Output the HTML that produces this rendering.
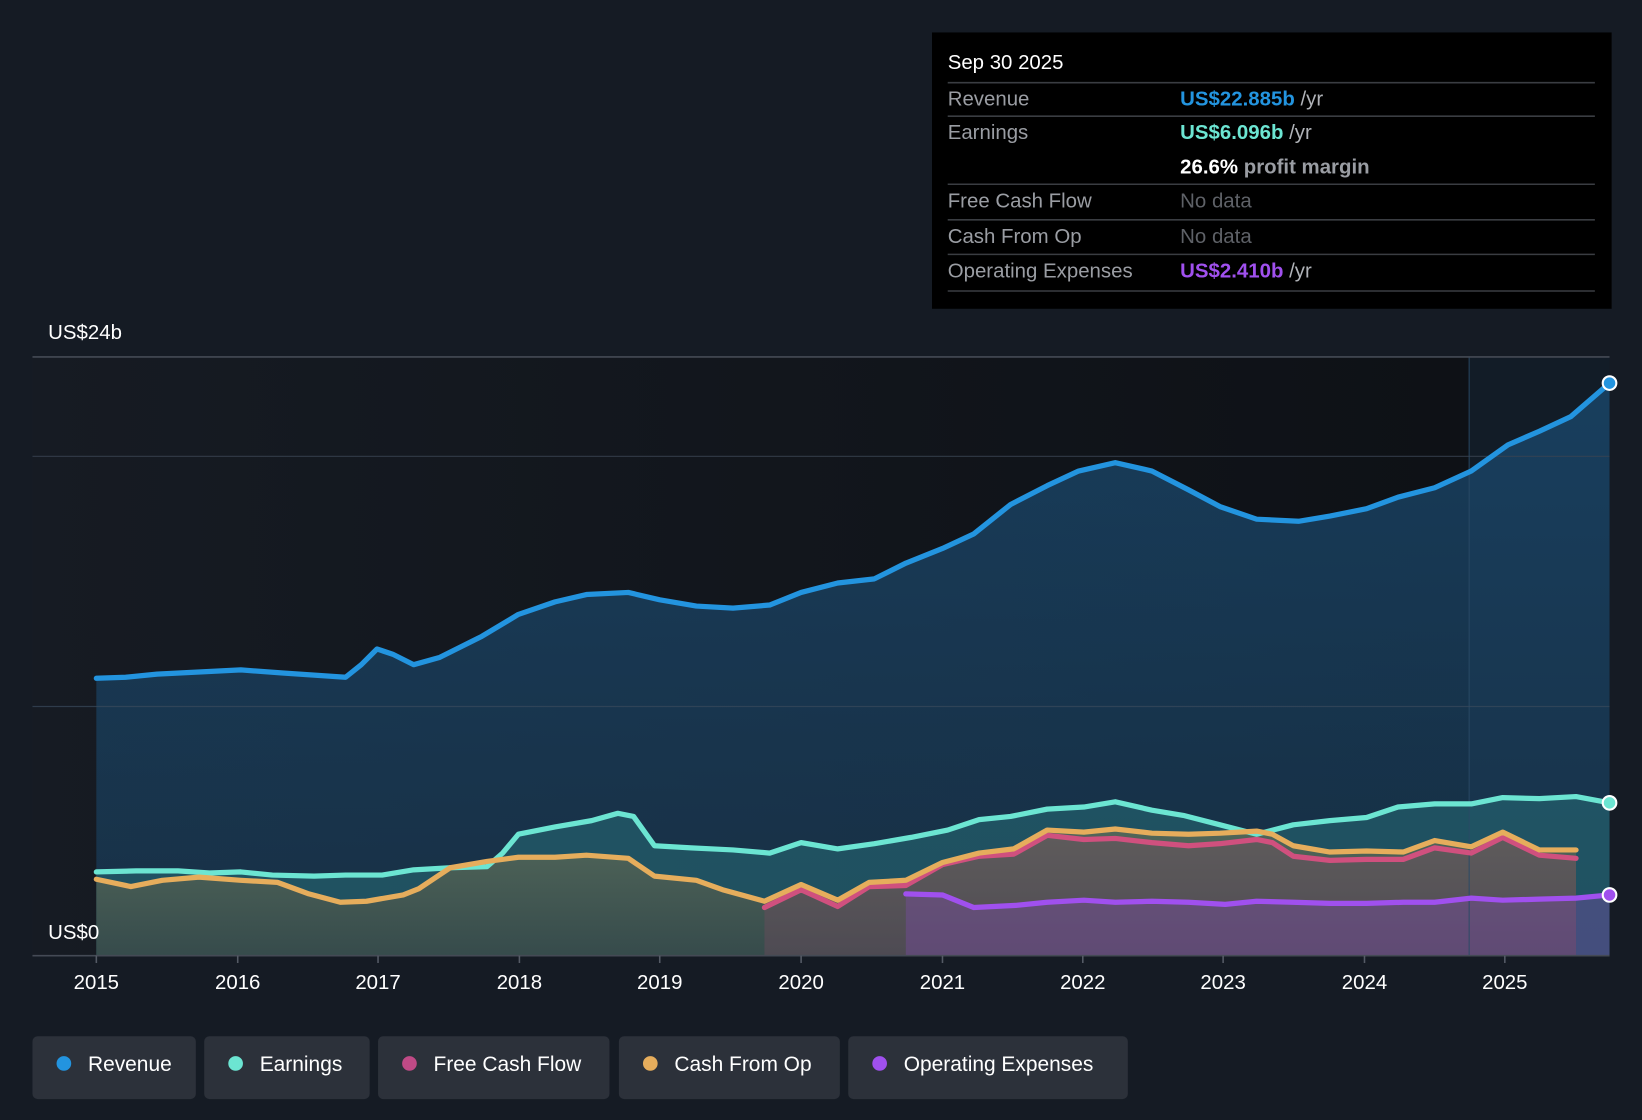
<!DOCTYPE html>
<html><head><meta charset="utf-8"><style>
html,body{margin:0;padding:0;background:#151b24;}
svg{display:block}
text{font-family:"Liberation Sans",sans-serif;}
</style></head><body>
<svg width="1642" height="1120" viewBox="0 0 1568 1070" preserveAspectRatio="none" xmlns="http://www.w3.org/2000/svg">
<defs>
<linearGradient id="plotbg" x1="0" x2="1" y1="0" y2="0">
<stop offset="0" stop-color="#161b23"/><stop offset="0.9" stop-color="#0e1116"/><stop offset="1" stop-color="#0e1116"/>
</linearGradient>
<linearGradient id="revf" x1="0" x2="0" y1="0" y2="1">
<stop offset="0" stop-color="#1a4a70" stop-opacity="0.75"/><stop offset="1" stop-color="#1a3a55" stop-opacity="0.7"/>
</linearGradient>
<linearGradient id="cashf" x1="0" x2="0" y1="0" y2="1">
<stop offset="0" stop-color="#5a6a58"/><stop offset="1" stop-color="#3a4a48"/>
</linearGradient>
</defs>
<rect width="1568" height="1070" fill="#151b24"/>
<rect x="31" y="341" width="1506" height="572" fill="url(#plotbg)"/>
<rect x="1403" y="341" width="134" height="572" fill="#1a3048" opacity="0.35"/>
<path fill="url(#revf)" d="M92,648 L120,647 150,644 190,642 230,640 270,643 300,645 330,647 345,635 360,620 375,625 395,635 420,628 460,608 495,587 530,575 560,568 600,566 630,573 665,579 700,581 735,578 765,566 800,557 835,553 865,538 900,524 930,510 965,482 1000,464 1030,450 1065,442 1100,450 1135,468 1165,484 1200,496 1240,498 1270,493 1305,486 1335,475 1370,466 1405,450 1440,425 1470,412 1500,398 1537,366 L1537,913 L92,913 Z"/>
<path fill="#2a7a80" fill-opacity="0.45" d="M92,833 L130,832 170,832 200,834 230,833 260,836 300,837 330,836 365,836 395,831 430,829 465,828 480,815 495,797 530,790 565,784 590,777 605,780 625,808 660,810 700,812 735,815 765,805 800,811 835,806 870,800 905,793 935,783 965,780 1000,773 1035,771 1065,766 1100,774 1130,779 1165,788 1200,797 1235,788 1270,784 1305,781 1335,771 1370,768 1405,768 1435,762 1470,763 1505,761 1537,767 L1537,913 L92,913 Z"/>
<path fill="url(#cashf)" fill-opacity="0.85" d="M92,840 L125,847 155,841 190,838 230,841 265,843 295,854 325,862 350,861 385,855 400,849 430,829 465,823 495,819 530,819 560,817 600,820 625,837 665,841 690,850 730,861 765,845 800,860 830,843 865,841 900,824 935,815 968,811 1000,793 1035,795 1065,792 1100,796 1135,797 1165,796 1200,794 1215,797 1235,808 1270,814 1305,813 1340,814 1370,803 1405,809 1435,795 1470,812 1505,812 L1505,913 L92,913 Z"/>
<path fill="#7a4a60" fill-opacity="0.35" d="M730,867 L765,850 800,866 830,847 865,846 900,826 935,818 968,816 1000,798 1035,802 1065,801 1100,805 1135,808 1165,806 1200,802 1215,805 1235,818 1270,822 1305,821 1340,821 1370,810 1405,815 1435,800 1470,817 1505,820 L1505,913 L730,913 Z"/>
<path fill="#7a4aa8" fill-opacity="0.4" d="M865,854 L900,855 930,867 970,865 1000,862 1035,860 1065,862 1100,861 1135,862 1170,864 1200,861 1235,862 1270,863 1305,863 1340,862 1370,862 1405,858 1435,860 1470,859 1505,858 1537,855 L1537,913 L865,913 Z"/>
<line x1="1403" y1="341" x2="1403" y2="913" stroke="#2a4a66" stroke-width="1.5" opacity="0.6"/>
<line x1="31" y1="341" x2="1537" y2="341" stroke="#444a55" stroke-width="1.5"/>
<line x1="31" y1="436" x2="1537" y2="436" stroke="#3a4452" stroke-width="1.2" opacity="0.7"/>
<line x1="31" y1="675" x2="1537" y2="675" stroke="#3a4a5c" stroke-width="1.2" opacity="0.7"/>
<line x1="31" y1="913" x2="1537" y2="913" stroke="#444a55" stroke-width="1.5"/>
<g fill="none" stroke-linejoin="round" stroke-linecap="round" stroke-width="5">
<path stroke="#2394df" d="M92,648 L120,647 150,644 190,642 230,640 270,643 300,645 330,647 345,635 360,620 375,625 395,635 420,628 460,608 495,587 530,575 560,568 600,566 630,573 665,579 700,581 735,578 765,566 800,557 835,553 865,538 900,524 930,510 965,482 1000,464 1030,450 1065,442 1100,450 1135,468 1165,484 1200,496 1240,498 1270,493 1305,486 1335,475 1370,466 1405,450 1440,425 1470,412 1500,398 1537,366"/>
<path stroke="#6ce5d2" d="M92,833 L130,832 170,832 200,834 230,833 260,836 300,837 330,836 365,836 395,831 430,829 465,828 480,815 495,797 530,790 565,784 590,777 605,780 625,808 660,810 700,812 735,815 765,805 800,811 835,806 870,800 905,793 935,783 965,780 1000,773 1035,771 1065,766 1100,774 1130,779 1165,788 1200,797 1235,788 1270,784 1305,781 1335,771 1370,768 1405,768 1435,762 1470,763 1505,761 1537,767"/>
<path stroke="#d0507e" d="M730,867 L765,850 800,866 830,847 865,846 900,826 935,818 968,816 1000,798 1035,802 1065,801 1100,805 1135,808 1165,806 1200,802 1215,805 1235,818 1270,822 1305,821 1340,821 1370,810 1405,815 1435,800 1470,817 1505,820"/>
<path stroke="#e6ad5c" d="M92,840 L125,847 155,841 190,838 230,841 265,843 295,854 325,862 350,861 385,855 400,849 430,829 465,823 495,819 530,819 560,817 600,820 625,837 665,841 690,850 730,861 765,845 800,860 830,843 865,841 900,824 935,815 968,811 1000,793 1035,795 1065,792 1100,796 1135,797 1165,796 1200,794 1215,797 1235,808 1270,814 1305,813 1340,814 1370,803 1405,809 1435,795 1470,812 1505,812"/>
<path stroke="#a050ee" d="M865,854 L900,855 930,867 970,865 1000,862 1035,860 1065,862 1100,861 1135,862 1170,864 1200,861 1235,862 1270,863 1305,863 1340,862 1370,862 1405,858 1435,860 1470,859 1505,858 1537,855"/>
</g>
<circle cx="1537" cy="366" r="6.5" fill="#2394df" stroke="#fff" stroke-width="2"/>
<circle cx="1537" cy="767" r="6.5" fill="#6ce5d2" stroke="#fff" stroke-width="2"/>
<circle cx="1537" cy="855" r="6.5" fill="#a050ee" stroke="#fff" stroke-width="2"/>
<text x="46" y="324" fill="#fff" font-size="19.5">US$24b</text>
<text x="46" y="897" fill="#fff" font-size="19.5">US$0</text>
<g fill="#fff" font-size="19.5" text-anchor="middle">
<text x="92" y="945">2015</text><text x="227" y="945">2016</text><text x="361" y="945">2017</text><text x="496" y="945">2018</text><text x="630" y="945">2019</text><text x="765" y="945">2020</text><text x="900" y="945">2021</text><text x="1034" y="945">2022</text><text x="1168" y="945">2023</text><text x="1303" y="945">2024</text><text x="1437" y="945">2025</text>
</g>
<g stroke="#555b66" stroke-width="1.5">
<line x1="92" y1="913" x2="92" y2="920"/><line x1="227" y1="913" x2="227" y2="920"/><line x1="361" y1="913" x2="361" y2="920"/><line x1="496" y1="913" x2="496" y2="920"/><line x1="630" y1="913" x2="630" y2="920"/><line x1="765" y1="913" x2="765" y2="920"/><line x1="900" y1="913" x2="900" y2="920"/><line x1="1034" y1="913" x2="1034" y2="920"/><line x1="1168" y1="913" x2="1168" y2="920"/><line x1="1303" y1="913" x2="1303" y2="920"/><line x1="1437" y1="913" x2="1437" y2="920"/>
</g>
<rect x="890" y="31" width="649" height="264" fill="#000"/>
<g stroke="#3a3d42" stroke-width="1.5">
<line x1="905" y1="79" x2="1523" y2="79"/><line x1="905" y1="111" x2="1523" y2="111"/><line x1="905" y1="176" x2="1523" y2="176"/><line x1="905" y1="210" x2="1523" y2="210"/><line x1="905" y1="243" x2="1523" y2="243"/><line x1="905" y1="278" x2="1523" y2="278"/>
</g>
<g font-size="19.5">
<text x="905" y="66" fill="#fff">Sep 30 2025</text>
<text x="905" y="101" fill="#9a9da3">Revenue</text>
<text x="1127" y="101" fill="#2394df" font-weight="bold">US$22.885b <tspan fill="#b0b3b8" font-weight="normal">/yr</tspan></text>
<text x="905" y="133" fill="#9a9da3">Earnings</text>
<text x="1127" y="133" fill="#6ce5d2" font-weight="bold">US$6.096b <tspan fill="#b0b3b8" font-weight="normal">/yr</tspan></text>
<text x="1127" y="166" fill="#fff" font-weight="bold">26.6% <tspan fill="#9a9da3">profit margin</tspan></text>
<text x="905" y="198" fill="#9a9da3">Free Cash Flow</text>
<text x="1127" y="198" fill="#5e6167">No data</text>
<text x="905" y="232" fill="#9a9da3">Cash From Op</text>
<text x="1127" y="232" fill="#5e6167">No data</text>
<text x="905" y="265" fill="#9a9da3">Operating Expenses</text>
<text x="1127" y="265" fill="#a050ee" font-weight="bold">US$2.410b <tspan fill="#b0b3b8" font-weight="normal">/yr</tspan></text>
</g>
<g fill="#2c313a">
<rect x="31" y="990" width="156" height="60" rx="5"/>
<rect x="195" y="990" width="158" height="60" rx="5"/>
<rect x="361" y="990" width="221" height="60" rx="5"/>
<rect x="591" y="990" width="211" height="60" rx="5"/>
<rect x="810" y="990" width="267" height="60" rx="5"/>
</g>
<circle cx="61" cy="1016" r="7" fill="#2394df"/>
<circle cx="225" cy="1016" r="7" fill="#6ce5d2"/>
<circle cx="391" cy="1016" r="7" fill="#c04a86"/>
<circle cx="621" cy="1016" r="7" fill="#e6ad5c"/>
<circle cx="840" cy="1016" r="7" fill="#a050ee"/>
<g fill="#fff" font-size="20">
<text x="84" y="1023">Revenue</text>
<text x="248" y="1023">Earnings</text>
<text x="414" y="1023">Free Cash Flow</text>
<text x="644" y="1023">Cash From Op</text>
<text x="863" y="1023">Operating Expenses</text>
</g>
</svg>
</body></html>
